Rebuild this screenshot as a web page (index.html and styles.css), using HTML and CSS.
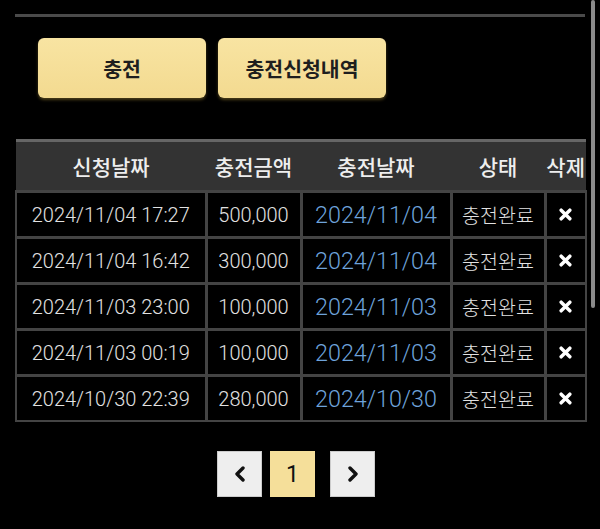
FILE: index.html
```html
<!DOCTYPE html>
<html lang="ko">
<head>
    <meta charset="UTF-8">
    <meta name="viewport" content="width=device-width, initial-scale=1.0">
    <title>충전신청내역</title>
    <link rel="stylesheet" href="styles.css">
</head>
<body>
    <div class="page">
        <div class="divider"></div>

        <div class="actions">
            <button class="btn-gold" type="button">충전</button>
            <button class="btn-gold" type="button">충전신청내역</button>
        </div>

        <table class="history">
            <colgroup>
                <col class="c-req">
                <col class="c-amount">
                <col class="c-date">
                <col class="c-state">
                <col class="c-del">
            </colgroup>
            <thead>
                <tr>
                    <th>신청날짜</th>
                    <th>충전금액</th>
                    <th>충전날짜</th>
                    <th>상태</th>
                    <th class="del-head">삭제</th>
                </tr>
            </thead>
            <tbody>
                <tr>
                    <td>2024/11/04 17:27</td>
                    <td>500,000</td>
                    <td class="paid">2024/11/04</td>
                    <td class="state">충전완료</td>
                    <td><svg class="del" viewBox="0 0 12 12"><path d="M2 2L10 10M10 2L2 10"/></svg></td>
                </tr>
                <tr>
                    <td>2024/11/04 16:42</td>
                    <td>300,000</td>
                    <td class="paid">2024/11/04</td>
                    <td class="state">충전완료</td>
                    <td><svg class="del" viewBox="0 0 12 12"><path d="M2 2L10 10M10 2L2 10"/></svg></td>
                </tr>
                <tr>
                    <td>2024/11/03 23:00</td>
                    <td>100,000</td>
                    <td class="paid">2024/11/03</td>
                    <td class="state">충전완료</td>
                    <td><svg class="del" viewBox="0 0 12 12"><path d="M2 2L10 10M10 2L2 10"/></svg></td>
                </tr>
                <tr>
                    <td>2024/11/03 00:19</td>
                    <td>100,000</td>
                    <td class="paid">2024/11/03</td>
                    <td class="state">충전완료</td>
                    <td><svg class="del" viewBox="0 0 12 12"><path d="M2 2L10 10M10 2L2 10"/></svg></td>
                </tr>
                <tr>
                    <td>2024/10/30 22:39</td>
                    <td>280,000</td>
                    <td class="paid">2024/10/30</td>
                    <td class="state">충전완료</td>
                    <td><svg class="del" viewBox="0 0 12 12"><path d="M2 2L10 10M10 2L2 10"/></svg></td>
                </tr>
            </tbody>
        </table>

        <div class="pager">
            <a class="pg pg-arrow" href="#"><svg viewBox="0 0 16 16"><path d="M11 2L5 8L11 14"/></svg></a>
            <a class="pg pg-current" href="#">1</a>
            <a class="pg pg-arrow pg-next" href="#"><svg viewBox="0 0 16 16"><path d="M5 2L11 8L5 14"/></svg></a>
        </div>
    </div>

    <div class="scrollbar"></div>
</body>
</html>
```

FILE: styles.css
```css
body {
    margin: 0;
    background: #000;
    color: #e2e2e2;
    font-family: Roboto, "Noto Sans CJK KR", sans-serif;
}

.page {
    padding: 14px 15px 0 15px;
}

.divider {
    height: 3px;
    background: #4a4a4a;
}

.actions {
    display: flex;
    gap: 12px;
    padding: 21px 0 0 23px;
}

.btn-gold {
    width: 168px;
    height: 60px;
    border: none;
    border-radius: 6px;
    background: linear-gradient(#f8e4a2, #f3da90);
    box-shadow: 0 2px 3px rgba(120, 100, 40, 0.6);
    color: #1e1e1e;
    font-family: "Noto Sans CJK KR", sans-serif;
    font-size: 20.5px;
    font-weight: bold;
    cursor: pointer;
}

.history {
    width: 570px;
    margin-top: 41px;
    border-collapse: collapse;
    table-layout: fixed;
}

.c-req { width: 190px; }
.c-amount { width: 95px; }
.c-date { width: 150px; }
.c-state { width: 94px; }
.c-del { width: 41px; }

.history th {
    height: 48px;
    padding: 0;
    background: #333;
    border-top: 3px solid #666;
    color: #eee;
    font-family: "Noto Sans CJK KR", sans-serif;
    font-size: 21px;
    font-weight: 500;
    text-align: center;
    white-space: nowrap;
}

.history th.del-head {
    text-align: right;
    padding-right: 1px;
}

.history td {
    height: 43px;
    padding: 0;
    border: 3px solid #444;
    text-align: center;
    font-size: 20px;
    font-weight: 300;
    white-space: nowrap;
}

.history td:first-child { border-left-width: 2px; }
.history td:last-child { border-right-width: 2px; }
.history tr:last-child td { border-bottom-width: 2px; }

.history td.paid {
    color: #6ea3db;
    font-size: 23.3px;
}

.history td.state {
    font-family: "Noto Sans CJK KR", sans-serif;
    font-size: 19.5px;
}

.del {
    width: 13px;
    height: 13px;
    display: block;
    margin: 0 auto;
    fill: none;
    stroke: #fff;
    stroke-width: 3.2;
    stroke-linecap: round;
}

.pager {
    display: flex;
    justify-content: center;
    gap: 8px;
    margin-top: 29px;
    padding-right: 8px;
}

.pg {
    width: 45px;
    height: 46px;
    display: flex;
    align-items: center;
    justify-content: center;
    box-sizing: border-box;
    border: 1px solid #ccc;
    background: #eee;
    color: #111;
    text-decoration: none;
    font-size: 23px;
}

.pg-current {
    background: #f5df9a;
    border-color: #f5df9a;
}

.pg-next {
    margin-left: 7px;
}

.pg svg {
    width: 16px;
    height: 16px;
    fill: none;
    stroke: #111;
    stroke-width: 3.4;
    stroke-linecap: round;
    stroke-linejoin: round;
}

.scrollbar {
    position: absolute;
    top: 0;
    left: 591px;
    width: 4px;
    height: 308px;
    border-radius: 2px;
    background: #8a8a8a;
}
```
